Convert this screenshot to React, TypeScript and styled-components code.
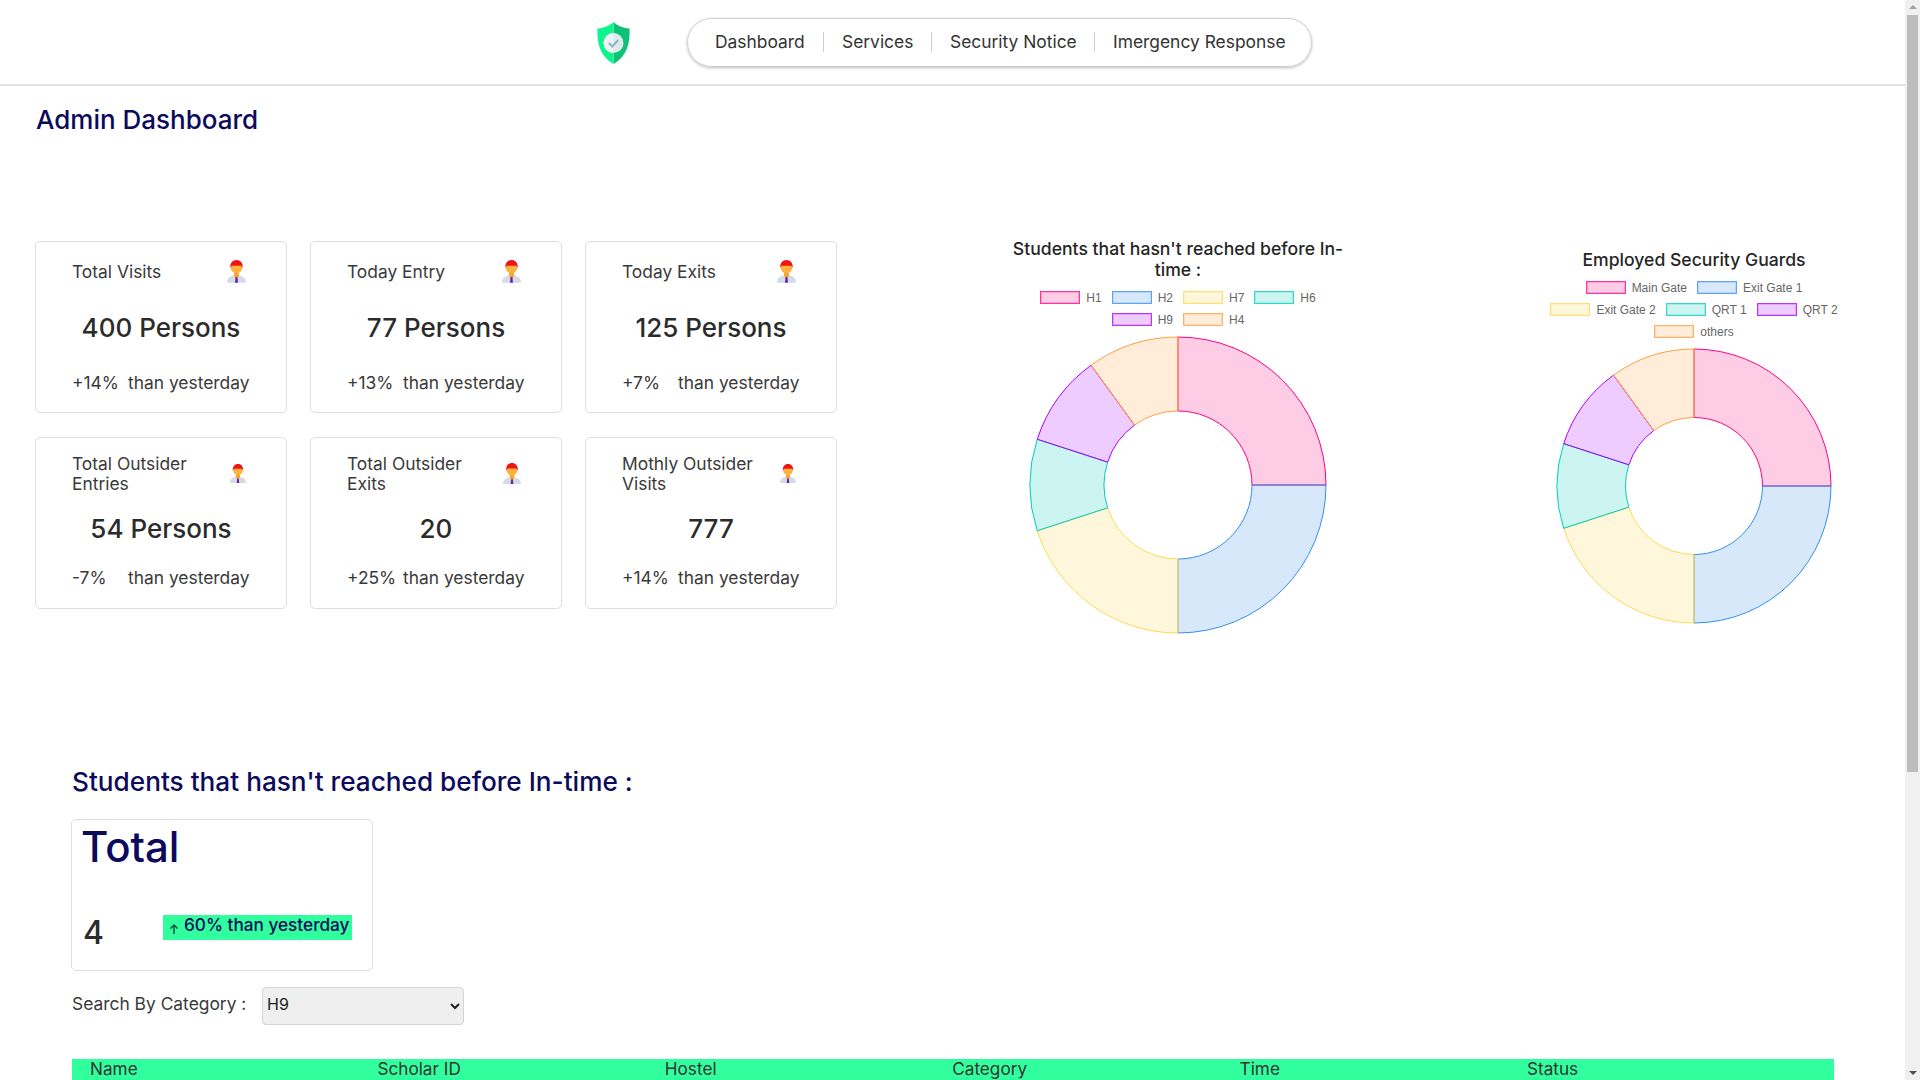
import * as React from 'react';
import styled, { createGlobalStyle } from 'styled-components';

const Navy = '#0c0a5c';
const Ink = '#2b2b2b';
const Mint = '#31ff9e';
const UiFont = '"Inter", "Noto Sans", sans-serif';

const GlobalStyle = createGlobalStyle`
	body {
		margin: 0;
		min-height: 1498px;
		background: #fff;
		font-family: ${UiFont};
		color: ${Ink};
	}
`;

const ScrollTrack = styled.div`
	position: fixed;
	top: 0;
	right: 0;
	bottom: 0;
	width: 15px;
	background: #f0f0f0;
`;

const ScrollThumb = styled.div`
	position: absolute;
	top: 15px;
	left: 2px;
	width: 11px;
	height: 757px;
	background: #bdbdbd;
`;

const ScrollArrow = styled.div<{ $down?: boolean }>`
	position: absolute;
	left: 3.5px;
	${props => (props.$down ? 'bottom: 5px;' : 'top: 5px;')}
	width: 0;
	height: 0;
	border-left: 4px solid transparent;
	border-right: 4px solid transparent;
	${props => (props.$down ? 'border-top: 4px solid #505050;' : 'border-bottom: 4px solid #a3a3a3;')}
`;

const Header = styled.header`
	display: flex;
	align-items: center;
	height: 84px;
	padding-left: 596px;
	border-bottom: 2px solid #e2e2e2;
`;

const Logo = styled.svg`
	width: 35px;
	height: 42px;
	margin: 2px 56px 0 0;
`;

const Nav = styled.nav`
	display: flex;
	align-items: center;
	box-sizing: border-box;
	width: 625px;
	height: 49px;
	padding-left: 27px;
	border: 1px solid #cfcfcf;
	border-radius: 25px;
	box-shadow: 0 1px 3px #bbb;
`;

const NavItem = styled.a<{ $width: number; $last?: boolean }>`
	display: flex;
	align-items: center;
	box-sizing: border-box;
	width: ${props => props.$width}px;
	height: 20px;
	padding-bottom: 2px;
	font-size: 17.4px;
	color: #333;
	white-space: nowrap;
	border-right: ${props => (props.$last ? 'none' : '1px solid #cfcfcf')};

	& + & {
		padding-left: 18px;
	}
`;

const Main = styled.main`
	padding-left: 35px;
`;

const PageTitle = styled.h1`
	margin: 19px 0 0 1px;
	font-size: 26px;
	line-height: 30px;
	font-weight: 500;
	color: ${Navy};
`;

const TopRow = styled.section`
	display: flex;
	align-items: flex-start;
	margin-top: 106px;
`;

const StatGrid = styled.div`
	display: grid;
	grid-template-columns: repeat(3, 252px);
	grid-auto-rows: 172px;
	column-gap: 23px;
	row-gap: 24px;
	width: 802px;
	flex: none;
`;

const StatCard = styled.article`
	display: flex;
	flex-direction: column;
	box-sizing: border-box;
	padding: 0 40px 0 36px;
	border: 1px solid #dedede;
	border-radius: 5px;
`;

const StatHead = styled.div<{ $tall: boolean }>`
	display: flex;
	align-items: center;
	justify-content: space-between;
	height: ${props => (props.$tall ? 67 : 55)}px;
	margin-top: 2px;
`;

const StatLabel = styled.div`
	max-width: 145px;
	font-size: 17.4px;
	line-height: 20px;
	color: #3a3a3a;
`;

const StatValue = styled.div<{ $tall: boolean }>`
	margin: ${props => (props.$tall ? 4 : 11)}px -40px 0 -36px;
	font-size: 26px;
	line-height: 36px;
	font-weight: 500;
	text-align: center;
	color: ${Ink};
`;

const StatFoot = styled.div<{ $tall: boolean }>`
	display: flex;
	margin-top: ${props => (props.$tall ? 20 : 26)}px;
	font-size: 17.4px;
	line-height: 22px;
	color: #3a3a3a;
	white-space: nowrap;
`;

const StatDelta = styled.span`
	width: 56px;
	flex: none;
`;

const ChartBox = styled.figure<{ $width: number; $left: number; $top: number }>`
	display: flex;
	flex-direction: column;
	align-items: center;
	flex: none;
	width: ${props => props.$width}px;
	margin: ${props => props.$top}px 0 0 ${props => props.$left}px;
`;

const ChartTitle = styled.figcaption`
	font-size: 17.6px;
	line-height: 21px;
	font-weight: 500;
	text-align: center;
	color: #262626;
`;

const Legend = styled.ul`
	display: flex;
	flex-wrap: wrap;
	justify-content: center;
	column-gap: 10px;
	row-gap: 9px;
	margin: 11px 0 0;
	padding: 0;
	list-style: none;
`;

const LegendItem = styled.li`
	display: flex;
	align-items: center;
	gap: 6px;
	height: 13px;
	font-family: 'Liberation Sans', Arial, sans-serif;
	font-size: 12px;
	color: #666;
`;

const Swatch = styled.span<{ $fill: string; $stroke: string }>`
	box-sizing: border-box;
	width: 40px;
	height: 13px;
	background: ${props => props.$fill};
	border: 1px solid ${props => props.$stroke};
	box-shadow: inset 0 0 0 1px ${props => props.$fill};
`;

const DonutSvg = styled.svg<{ $gap: number }>`
	display: block;
	margin-top: ${props => props.$gap}px;
`;

const Section = styled.section`
	padding-left: 37px;
`;

const SectionTitle = styled.h2`
	margin: 131px 0 0;
	font-size: 26.2px;
	line-height: 32px;
	font-weight: 500;
	color: ${Navy};
`;

const TotalCard = styled.article`
	display: flex;
	flex-direction: column;
	box-sizing: border-box;
	width: 302px;
	height: 152px;
	margin: 21px 0 0 -1px;
	padding: 0 9px;
	border: 1px solid #dedede;
	border-radius: 5px;
`;

const TotalTitle = styled.div`
	margin-top: 5px;
	font-size: 42px;
	line-height: 44px;
	font-weight: 500;
	color: ${Navy};
`;

const TotalRow = styled.div`
	display: flex;
	align-items: flex-start;
	margin-top: 46px;
`;

const TotalValue = styled.div`
	width: 82px;
	padding-left: 2px;
	box-sizing: border-box;
	font-size: 32px;
	line-height: 36px;
	font-weight: 500;
	color: ${Ink};
`;

const Badge = styled.div`
	display: flex;
	align-items: flex-start;
	width: 189px;
	height: 25px;
	box-sizing: border-box;
	padding-left: 5px;
	background: ${Mint};
	font-size: 17.2px;
	line-height: 20px;
	font-weight: 500;
	color: ${Navy};
	white-space: nowrap;
`;

const BadgeArrow = styled.svg`
	width: 12px;
	height: 12px;
	margin: 8px 4px 0 0;
	flex: none;
`;

const SearchRow = styled.div`
	display: flex;
	align-items: flex-start;
	margin-top: 16px;
`;

const SearchLabel = styled.label`
	width: 190px;
	font-size: 17.4px;
	line-height: 34px;
	color: #3a3a3a;
	white-space: nowrap;
`;

const Select = styled.select`
	box-sizing: border-box;
	width: 202px;
	height: 38px;
	padding: 0 0 4px 0;
	background: #efefef;
	border: 1px solid #d4d4d4;
	border-radius: 4px;
	font-family: ${UiFont};
	font-size: 16px;
	color: #222;
`;

const TableHead = styled.div`
	display: grid;
	grid-template-columns: repeat(6, 287.4px);
	box-sizing: border-box;
	width: 1762px;
	height: 30px;
	margin-top: 34px;
	padding-left: 18px;
	background: ${Mint};
	font-size: 17.2px;
	line-height: 19px;
	color: #333;
`;

interface Slice {
	label: string;
	value: number;
	color: string;
}

const rgba = (rgb: string, alpha: number) => `rgba(${rgb}, ${alpha})`;

const HOSTELS: Slice[] = [
	{ label: 'H1', value: 25, color: '255, 0, 132' },
	{ label: 'H2', value: 25, color: '54, 142, 235' },
	{ label: 'H7', value: 20, color: '255, 217, 80' },
	{ label: 'H6', value: 10, color: '0, 206, 190' },
	{ label: 'H9', value: 10, color: '170, 0, 255' },
	{ label: 'H4', value: 10, color: '255, 159, 64' }
];

const GUARDS: Slice[] = ['Main Gate', 'Exit Gate 1', 'Exit Gate 2', 'QRT 1', 'QRT 2', 'others'].map((label, i) => ({
	...HOSTELS[i],
	label
}));

const polar = (center: number, radius: number, percent: number) => {
	const angle = (percent / 100) * Math.PI * 2;
	return `${center + radius * Math.sin(angle)} ${center - radius * Math.cos(angle)}`;
};

const Donut = (props: { slices: Slice[]; radius: number; gap: number }) => {
	const { slices, radius, gap } = props;
	const inner = radius / 2;
	const size = radius * 2 + 4;
	const center = size / 2;
	let start = 0;

	return (
		<DonutSvg $gap={gap} width={size} height={size} viewBox={`0 0 ${size} ${size}`}>
			{slices.map(slice => {
				const end = start + slice.value;
				const large = slice.value > 50 ? 1 : 0;
				const d = [
					`M ${polar(center, radius, start)}`,
					`A ${radius} ${radius} 0 ${large} 1 ${polar(center, radius, end)}`,
					`L ${polar(center, inner, end)}`,
					`A ${inner} ${inner} 0 ${large} 0 ${polar(center, inner, start)}`,
					'Z'
				].join(' ');
				start = end;
				return <path key={slice.label} d={d} fill={rgba(slice.color, 0.2)} stroke={rgba(slice.color, 1)} strokeWidth={1} />;
			})}
		</DonutSvg>
	);
};

const ChartLegend = (props: { slices: Slice[] }) => (
	<Legend>
		{props.slices.map(slice => (
			<LegendItem key={slice.label}>
				<Swatch $fill={rgba(slice.color, 0.2)} $stroke={rgba(slice.color, 0.75)} />
				{slice.label}
			</LegendItem>
		))}
	</Legend>
);

const PersonSvg = styled.svg`
	flex: none;
`;

const PersonIcon = (props: { size: number }) => (
	<PersonSvg width={props.size} height={props.size * 1.2} viewBox="0 0 20 24">
		<path d="M0 24c0-4 1.500-6 4.500-7l3.500-1.500h4l3.500 1.500c3 1 4.500 3 4.500 7z" fill="#d5dbe3" />
		<path d="M7.500 13h5v4l-2.500 2-2.500-2z" fill="#f5a623" />
		<path d="M9 18h2l.5 6h-3z" fill="#6a1bb5" />
		<circle cx="10" cy="8" r="6" fill="#ffb23e" />
		<path d="M3.500 8.500C3 3 6 0 10 0s7 3 6.500 8.500L15 6c-3 0-7 0-10 0z" fill="#f01414" />
	</PersonSvg>
);

interface Stat {
	label: string;
	value: string;
	delta: string;
	icon: number;
	tall?: boolean;
}

const STATS: Stat[] = [
	{ label: 'Total Visits', value: '400 Persons', delta: '+14%', icon: 19 },
	{ label: 'Today Entry', value: '77 Persons', delta: '+13%', icon: 19 },
	{ label: 'Today Exits', value: '125 Persons', delta: '+7%', icon: 19 },
	{ label: 'Total Outsider Entries', value: '54 Persons', delta: '-7%', icon: 16, tall: true },
	{ label: 'Total Outsider Exits', value: '20', delta: '+25%', icon: 18, tall: true },
	{ label: 'Mothly Outsider Visits', value: '777', delta: '+14%', icon: 16, tall: true }
];

const NAV_ITEMS = [
	{ label: 'Dashboard', width: 109 },
	{ label: 'Services', width: 108 },
	{ label: 'Security Notice', width: 163 },
	{ label: 'Imergency Response', width: 200, last: true }
];

const COLUMNS = ['Name', 'Scholar ID', 'Hostel', 'Category', 'Time', 'Status'];

export default function App() {
	return (
		<>
			<GlobalStyle />
			<Header>
				<Logo viewBox="0 0 35 42">
					<path d="M17.500 0c3 3 9 6 16 6.500 1 15-3 28-16 35.500z" fill="#0cc274" />
					<path d="M17.500 0c-3 3-9 6-16 6.500-1 15 3 28 16 35.500z" fill="#0ff58e" />
					<circle cx="17.500" cy="21" r="10" fill="#dfe9ee" />
					<path d="M17.500 11a10 10 0 0 0 0 20z" fill="#eef3f6" />
					<path d="M13 21l3.200 3.500 6-6.500" fill="none" stroke="#8db6bd" strokeWidth="2" />
				</Logo>
				<Nav>
					{NAV_ITEMS.map(item => (
						<NavItem key={item.label} $width={item.width} $last={item.last}>
							{item.label}
						</NavItem>
					))}
				</Nav>
			</Header>
			<Main>
				<PageTitle>Admin Dashboard</PageTitle>
				<TopRow>
					<StatGrid>
						{STATS.map(stat => (
							<StatCard key={stat.label}>
								<StatHead $tall={!!stat.tall}>
									<StatLabel>{stat.label}</StatLabel>
									<PersonIcon size={stat.icon} />
								</StatHead>
								<StatValue $tall={!!stat.tall}>{stat.value}</StatValue>
								<StatFoot $tall={!!stat.tall}>
									<StatDelta>{stat.delta}</StatDelta>
									than yesterday
								</StatFoot>
							</StatCard>
						))}
					</StatGrid>
					<ChartBox $width={340} $left={171} $top={-3}>
						<ChartTitle>Students that hasn't reached before In-time :</ChartTitle>
						<ChartLegend slices={HOSTELS} />
						<Donut slices={HOSTELS} radius={148} gap={9} />
					</ChartBox>
					<ChartBox $width={300} $left={196} $top={8}>
						<ChartTitle>Employed Security Guards</ChartTitle>
						<ChartLegend slices={GUARDS} />
						<Donut slices={GUARDS} radius={137} gap={9} />
					</ChartBox>
				</TopRow>
				<Section>
					<SectionTitle>Students that hasn't reached before In-time :</SectionTitle>
					<TotalCard>
						<TotalTitle>Total</TotalTitle>
						<TotalRow>
							<TotalValue>4</TotalValue>
							<Badge>
								<BadgeArrow viewBox="0 0 12 12">
									<path d="M6 11V2M2.500 5.500L6 2l3.500 3.500" fill="none" stroke="#12463c" strokeWidth="1.400" />
								</BadgeArrow>
								60% than yesterday
							</Badge>
						</TotalRow>
					</TotalCard>
					<SearchRow>
						<SearchLabel>Search By Category :</SearchLabel>
						<Select defaultValue="H9">
							{HOSTELS.map(slice => (
								<option key={slice.label}>{slice.label}</option>
							))}
						</Select>
					</SearchRow>
					<TableHead>
						{COLUMNS.map(column => (
							<div key={column}>{column}</div>
						))}
					</TableHead>
				</Section>
			</Main>
			<ScrollTrack>
				<ScrollArrow />
				<ScrollThumb />
				<ScrollArrow $down />
			</ScrollTrack>
		</>
	);
}
